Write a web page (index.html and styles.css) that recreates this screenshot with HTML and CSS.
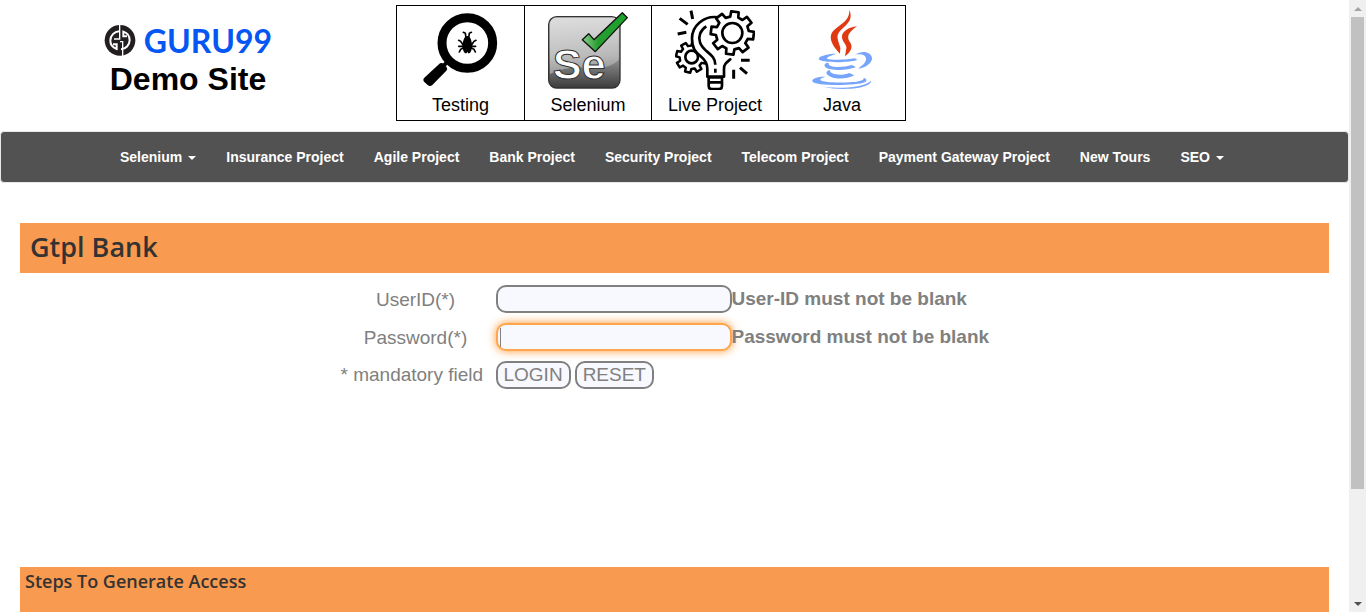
FILE: index.html
```html
<!DOCTYPE html>
<html lang="en">
<head>
<meta charset="utf-8">
<title>Gtpl Bank Home Page</title>
<link rel="stylesheet" href="styles.css">
</head>
<body>
<div class="page">
  <header class="header">
    <div class="brand">
      <div class="brand-logo">
        <svg class="brand-mark" viewBox="42 45 96 96" aria-hidden="true">
          <circle cx="90" cy="91" r="46" fill="#231f20"/>
          <g fill="none" stroke="#fff" stroke-width="6">
            <path id="half" d="M87 64A28 28 0 0 0 61 91A27 27 0 0 0 80 117V103H69"/>
            <use href="#half" transform="rotate(180 90 91)"/>
            <path d="M89 43V87H72M98 139V95H90" stroke-width="4"/>
          </g>
        </svg>
        <span class="brand-name">GURU99</span>
      </div>
      <div class="brand-title">Demo Site</div>
    </div>
    <ul class="tiles">
      <li class="tile"><a class="tile-link" href="#">
        <svg class="tile-icon" viewBox="92 30 240 240" aria-hidden="true">
          <circle cx="231" cy="129" r="76" fill="none" stroke="#000" stroke-width="27"/>
          <path d="M182 175L160 197" stroke="#000" stroke-width="12"/>
          <path d="M149 190Q155 187 160 192L168 200Q173 206 168 212L126 255Q119 261 112 255L102 246Q96 239 102 233Z"/>
          <path d="M231 108C240 109 243 120 245 131C246 145 243 157 236 160Q233 161 231 155Q229 161 226 160C219 157 216 145 217 131C219 120 222 109 231 108Z"/>
          <path d="M219 97L225 100L227 113M243 97L237 100L235 113M205 121L211 124L218 134M257 121L251 124L244 134M205 139H256M207 156L211 148L219 144M255 156L251 148L243 144" fill="none" stroke="#000" stroke-width="5" stroke-linecap="round"/>
        </svg>
        <span>Testing</span></a></li>
      <li class="tile"><a class="tile-link" href="#">
        <svg class="tile-icon" viewBox="84 30 240 240" aria-hidden="true">
          <defs>
            <linearGradient id="plate" x1="0" y1="0" x2="0" y2="1"><stop offset="0" stop-color="#c9c9c9"/><stop offset=".55" stop-color="#999"/><stop offset="1" stop-color="#3c3c3c"/></linearGradient>
            <linearGradient id="gloss" x1="0" y1="0" x2="1" y2="1"><stop offset="0" stop-color="#f2f2f2" stop-opacity=".5"/><stop offset="1" stop-color="#fff" stop-opacity=".25"/></linearGradient>
            <linearGradient id="tick" x1="0" y1="0" x2="1" y2="0"><stop offset="0" stop-color="#8bd08b"/><stop offset=".35" stop-color="#279c30"/><stop offset="1" stop-color="#19a42a"/></linearGradient>
          </defs>
          <rect x="86" y="50" width="214" height="214" rx="24" fill="url(#plate)" stroke="#333" stroke-width="4"/>
          <path d="M90 74Q90 54 110 54H276Q296 54 296 74V180Q270 208 210 203Q140 196 90 222Z" fill="url(#gloss)"/>
          <text class="se-text" x="98" y="237">Se</text>
          <path d="M187 119L206 101L222 119L307 38L322 53L226 155Z" fill="url(#tick)" stroke="#111" stroke-width="4" stroke-linejoin="round"/>
        </svg>
        <span>Selenium</span></a></li>
      <li class="tile"><a class="tile-link" href="#">
        <svg class="tile-icon" viewBox="81 30 240 240" aria-hidden="true">
          <defs>
            <path id="gear" d="M-3.9-15.5L-3.6-20.7H3.6L3.9-15.5L8.2-13.7L12.1-17.2L17.2-12.1L13.7-8.2L15.5-3.9L20.7-3.6V3.6L15.5 3.9L13.7 8.2L17.2 12.1L12.1 17.2L8.2 13.7L3.9 15.5L3.6 20.7H-3.6L-3.9 15.5L-8.2 13.7L-12.1 17.2L-17.2 12.1L-13.7 8.2L-15.5 3.9L-20.7 3.6V-3.6L-15.5-3.9L-13.7-8.2L-17.2-12.1L-12.1-17.2L-8.2-13.7Z"/>
          </defs>
          <g fill="#fff" stroke="#000" stroke-width="8" stroke-linejoin="round">
            <use href="#gear" transform="translate(130 172) rotate(14) scale(2.2)" stroke-width="3.4"/>
            <circle cx="131" cy="171" r="19"/>
            <path d="M212 52C166 45 132 79 132 115C132 145 142 156 158 169C174 182 178 192 178 207V230H228V206C228 192 236 187 247 178L250 100Z" stroke="none"/>
            <path d="M212 52C166 45 132 79 132 115C132 145 142 156 158 169C174 182 178 192 178 207V230H228V206C228 192 236 187 247 178" fill="none" stroke-linecap="round"/>
            <path d="M175 79C157 90 150 109 156 127C165 157 202 160 202 194M202 206V218" fill="none"/>
            <path d="M182 232H222V258Q222 267 213 267H191Q182 267 182 258ZM182 247H222"/>
            <use href="#gear" transform="translate(253 99) rotate(7) scale(3.1)" stroke-width="2.6"/>
            <circle cx="253" cy="99" r="30"/>
            <path d="M95 55L119 73M129 32L134 57M89 102L115 97M279 181H305M276 203L297 221M257 209V236" stroke-width="9"/>
          </g>
        </svg>
        <span>Live Project</span></a></li>
      <li class="tile"><a class="tile-link" href="#">
        <svg class="tile-icon" viewBox="81 30 240 240" aria-hidden="true">
          <g fill="#e03a12">
            <path d="M223 29C236 62 214 74 197 91C180 108 190 122 196 144L195 161C178 143 164 124 168 106C175 77 225 73 223 29Z"/>
            <path d="M246 79C221 82 200 94 201 112C202 127 216 134 214 145L210 169C226 157 234 144 227 130C215 113 215 101 246 79Z"/>
          </g>
          <g fill="#76a5fb">
            <path d="M184 161C165 161 129 167 131 177C135 188 214 190 247 180L240 175C218 180 167 181 156 176C154 171 169 166 184 161Z"/>
            <path d="M240 164C263 149 289 156 291 174C292 190 269 204 250 206C262 196 275 187 273 175C271 164 257 161 240 164Z"/>
            <path d="M156 188C144 193 146 202 164 207C188 212 219 210 243 202L231 195C211 201 182 203 167 198C161 195 160 192 161 189Z"/>
            <path d="M162 211C151 215 151 224 168 231C188 239 216 237 238 226L223 219C207 226 185 226 172 220C165 217 165 214 166 211Z"/>
            <path d="M151 230C132 229 109 235 112 244C117 260 251 257 269 247C278 242 275 236 266 233C269 239 255 245 232 246C197 249 145 248 137 241C133 236 143 233 151 230Z"/>
            <path d="M146 261C182 270 253 269 276 256C286 251 290 244 288 242C274 258 229 263 188 263C171 263 157 262 146 261Z"/>
          </g>
        </svg>
        <span>Java</span></a></li>
    </ul>
  </header>

  <nav class="navbar">
    <a class="nav-link has-menu" href="#">Selenium</a>
    <a class="nav-link" href="#">Insurance Project</a>
    <a class="nav-link" href="#">Agile Project</a>
    <a class="nav-link" href="#">Bank Project</a>
    <a class="nav-link" href="#">Security Project</a>
    <a class="nav-link" href="#">Telecom Project</a>
    <a class="nav-link" href="#">Payment Gateway Project</a>
    <a class="nav-link" href="#">New Tours</a>
    <a class="nav-link has-menu" href="#">SEO</a>
  </nav>

  <main class="content">
    <h2 class="bar-title">Gtpl Bank</h2>
    <form class="login">
      <label class="login-label" for="uid">UserID(*)</label>
      <div class="login-field">
        <input class="login-input" id="uid" type="text">
        <strong>User-ID must not be blank</strong>
      </div>
      <label class="login-label" for="pwd">Password(*)</label>
      <div class="login-field">
        <input class="login-input is-active" id="pwd" type="password">
        <strong>Password must not be blank</strong>
      </div>
      <span class="login-note">* mandatory field</span>
      <div class="login-actions">
        <button class="login-button" type="submit">LOGIN</button>
        <button class="login-button" type="reset">RESET</button>
      </div>
    </form>
    <section class="steps">
      <h3 class="steps-title">Steps To Generate Access</h3>
    </section>
  </main>
</div>
<div class="scrollbar" aria-hidden="true">
  <span class="arrow arrow-up"></span>
  <span class="track"><span class="thumb"></span></span>
  <span class="arrow arrow-down"></span>
</div>
</body>
</html>
```

FILE: styles.css
```css
* { box-sizing: border-box; }

body {
  margin: 0;
  display: flex;
  height: 100vh;
  overflow: hidden;
  background: #fff;
  font-family: "Liberation Sans", Arial, sans-serif;
}

a { color: inherit; text-decoration: none; }

.page {
  flex: 1;
  min-width: 0;
  display: flex;
  flex-direction: column;
}

/* Header */
.header {
  display: flex;
  align-items: flex-start;
  gap: 20px;
  padding: 5px 0 10px;
}
.brand {
  flex: 0 0 376px;
  display: flex;
  flex-direction: column;
  align-items: center;
  padding-top: 16px;
}
.brand-logo {
  display: flex;
  align-items: center;
  gap: 8px;
  height: 40px;
}
.brand-mark { width: 32px; height: 32px; }
.brand-name {
  color: #0556f3;
  font: 700 32px/36px Lato, sans-serif;
}
.brand-title {
  font-size: 32px;
  font-weight: bold;
  line-height: 36px;
}

.tiles {
  display: flex;
  margin: 0;
  padding: 0;
  list-style: none;
}
.tile {
  width: 129px;
  border: 1px solid #000;
}
.tile + .tile { width: 128px; margin-left: -1px; }
.tile-link {
  display: flex;
  flex-direction: column;
  align-items: center;
  padding-top: 4px;
  color: #000;
  font-size: 18px;
  line-height: 30px;
}
.tile-icon { width: 80px; height: 80px; }
.se-text {
  font: bold 130px "Liberation Sans", Arial, sans-serif;
  fill: #fff;
  stroke: #333;
  stroke-width: 3px;
}

/* Navigation */
.navbar {
  display: flex;
  padding-left: 104px;
  background: #525252;
  border: 1px solid #e7e7e7;
  border-radius: 4px;
}
.nav-link {
  padding: 15px;
  color: #fff;
  font-size: 14px;
  font-weight: bold;
  line-height: 20px;
  white-space: nowrap;
}
.has-menu::after {
  content: "";
  display: inline-block;
  margin-left: 6px;
  vertical-align: middle;
  border-top: 4px solid #fff;
  border-right: 4px solid transparent;
  border-left: 4px solid transparent;
}

/* Content */
.content {
  flex: 1;
  display: flex;
  flex-direction: column;
  padding: 40px 20px 0;
}
.bar-title {
  margin: 0;
  padding: 0 10px 2px;
  background: #f89a4f;
  color: #333;
  font: 600 27px/48px "Open Sans", sans-serif;
}

.login {
  display: grid;
  grid-template-columns: 160px 518px;
  grid-auto-rows: 28px;
  row-gap: 10px;
  align-self: center;
  padding-top: 12px;
  color: gray;
  font-size: 19px;
  line-height: 28px;
}
.login-label { text-align: center; line-height: 30px; }
.login-note { padding-left: 5px; }
.login-field { display: flex; }
.login-input {
  width: 236px;
  height: 28px;
  padding: 1px 2px;
  background: #f8f8ff;
  border: 2px solid gray;
  border-radius: 10px;
  color: gray;
  font: inherit;
  outline: none;
}
.login-input.is-active {
  background: linear-gradient(gray, gray) 2px 3px / 1px 19px no-repeat #f8f8ff;
  border-color: #ffa64d;
  box-shadow: 0 0 10px #ff9633;
}
.login-actions { display: flex; gap: 4px; }
.login-button {
  height: 28px;
  padding: 0 6px;
  background: #f8f8ff;
  border: 2px solid gray;
  border-radius: 10px;
  color: gray;
  font: 19px/22px "Liberation Sans", Arial, sans-serif;
}

.steps {
  flex: 1;
  margin-top: 178px;
  padding: 3px 5px;
  background: #f89a4f;
}
.steps-title {
  margin: 0;
  color: #333;
  font: 600 18px/22px "Open Sans", sans-serif;
}

/* Scrollbar */
.scrollbar {
  flex: 0 0 17px;
  display: flex;
  flex-direction: column;
  background: #f0f0f0;
}
.track { flex: 1; }
.thumb {
  display: block;
  height: 81.7%;
  margin: 0 2px;
  background: #c1c1c1;
}
.arrow {
  display: flex;
  align-items: center;
  justify-content: center;
  height: 17px;
}
.arrow::before {
  content: "";
  border: 4px solid transparent;
}
.arrow-up::before { border-top: 0; border-bottom-color: #a3a3a3; }
.arrow-down::before { border-bottom: 0; border-top-color: #505050; }
```
